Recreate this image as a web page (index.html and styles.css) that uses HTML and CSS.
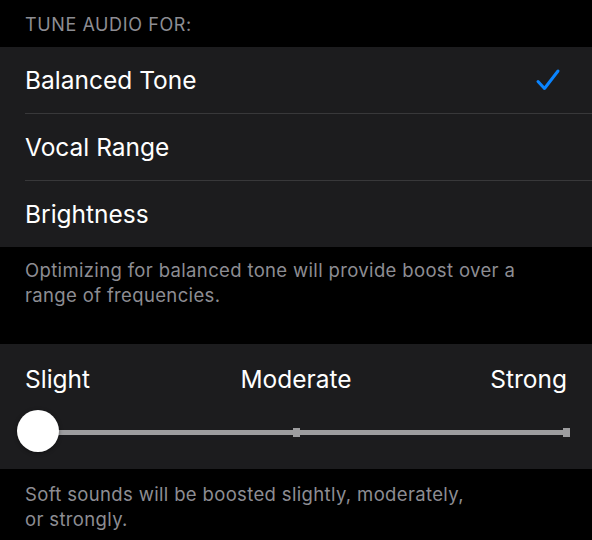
FILE: index.html
```html
<!DOCTYPE html>
<html lang="en">
<head>
    <meta charset="UTF-8">
    <meta name="viewport" content="width=device-width, initial-scale=1.0">
    <title>Tune Audio</title>
    <link rel="stylesheet" href="styles.css">
</head>
<body>
    <div class="settings">
        <div class="section-header">Tune Audio For:</div>
        <div class="group">
            <div class="row">
                <div class="row-inner">
                    <span class="row-label">Balanced Tone</span>
                    <svg class="check" width="26" height="24" viewBox="0 0 26 24">
                        <path d="M3 13.5 L9.5 20.5 L23 3" fill="none" stroke="#0a84ff" stroke-width="3" stroke-linecap="round" stroke-linejoin="round"/>
                    </svg>
                </div>
            </div>
            <div class="row">
                <div class="row-inner">
                    <span class="row-label">Vocal Range</span>
                </div>
            </div>
            <div class="row last">
                <div class="row-inner">
                    <span class="row-label">Brightness</span>
                </div>
            </div>
        </div>
        <div class="section-footer first-footer">
            Optimizing for balanced tone will provide boost over a range of frequencies.
        </div>

        <div class="group slider-group">
            <div class="slider-labels">
                <span class="label-start">Slight</span>
                <span class="label-mid">Moderate</span>
                <span class="label-end">Strong</span>
            </div>
            <div class="slider">
                <div class="track"></div>
                <div class="tick tick-mid"></div>
                <div class="tick tick-end"></div>
                <div class="thumb"></div>
            </div>
        </div>
        <div class="section-footer last-footer">
            Soft sounds will be boosted slightly, moderately,<br>or strongly.
        </div>
    </div>
</body>
</html>
```

FILE: styles.css
```css
/* page */
body {
    margin: 0;
    background-color: #000;
    font-family: Inter, "Noto Sans", sans-serif;
    color: #fff;
    -webkit-font-smoothing: antialiased;
}

.settings {
    width: 592px;
}

.section-header {
    height: 47px;
    box-sizing: border-box;
    padding: 14px 25px 0;
    font-size: 18px;
    line-height: 22px;
    color: #8d8d93;
    text-transform: uppercase;
    letter-spacing: 0.6px;
}

/* grouped list */
.group {
    background-color: #1c1c1e;
}

.row {
    padding-left: 25px;
}

.row-inner {
    height: 66px;
    display: flex;
    align-items: center;
    justify-content: space-between;
    padding-right: 31px;
    border-bottom: 1px solid #38383a;
}

.row.last .row-inner {
    border-bottom: none;
}

.row-label {
    font-size: 24.5px;
}

.check {
    display: block;
    margin-top: -1px;
}

.section-footer {
    padding: 11px 25px 0;
    font-size: 18.5px;
    line-height: 25px;
    letter-spacing: 0.35px;
    color: #8d8d93;
    max-width: 505px;
}

.first-footer {
    height: 86px;
}

.last-footer {
    padding-top: 13px;
}

/* slider */
.slider-group {
    height: 125px;
    padding: 0 25px;
    box-sizing: border-box;
}

.slider-labels {
    display: grid;
    grid-template-columns: 1fr auto 1fr;
    padding-top: 20px;
    font-size: 24.5px;
    line-height: 30px;
}

.label-end {
    text-align: right;
}

.slider {
    position: relative;
    height: 42px;
    margin: 16px -25px 0;
}

.track {
    position: absolute;
    left: 38px;
    right: 25px;
    top: 20px;
    height: 5px;
    background-color: #9d9d9f;
}

.tick {
    position: absolute;
    top: 18px;
    width: 7px;
    height: 9px;
    background-color: #9d9d9f;
}

.tick-mid {
    left: 293px;
}

.tick-end {
    left: 563px;
}

.thumb {
    position: absolute;
    left: 17px;
    top: 0;
    width: 42px;
    height: 42px;
    border-radius: 50%;
    background-color: #fff;
    box-shadow: 0 1px 4px rgba(0, 0, 0, 0.4);
}
```
